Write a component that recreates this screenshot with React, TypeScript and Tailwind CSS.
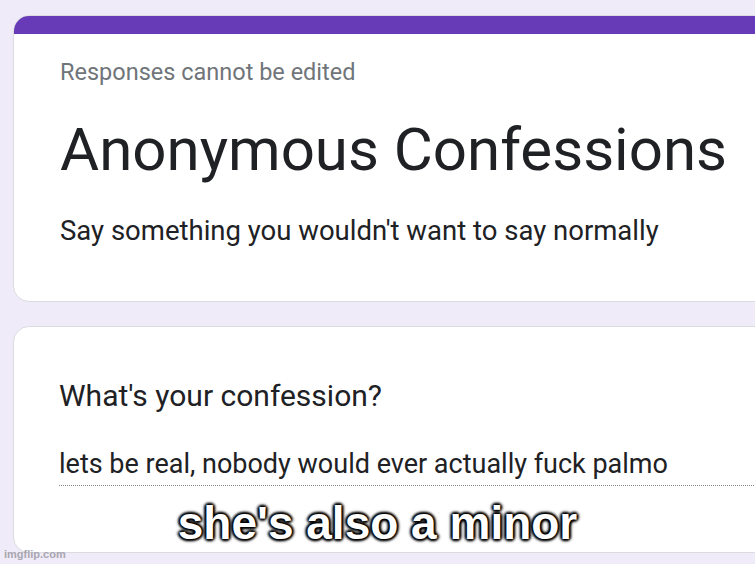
const roboto = "font-['Roboto','Noto_Sans',sans-serif]";

function Card({ children, top = false }: { children: React.ReactNode; top?: boolean }) {
  return (
    <div className="w-[800px] overflow-hidden rounded-[16px] border border-[#dadce0] bg-white">
      {top && <div className="h-[18px] bg-[#673ab7]" />}
      {children}
    </div>
  );
}

export default function App() {
  return (
    <div className={`relative h-[564px] w-[755px] overflow-hidden bg-[#f0ebf8] ${roboto}`}>
      <div className="flex flex-col gap-[24px] pl-[13px] pt-[15px]">
        {/* Form header */}
        <Card top>
          <div className="pl-[46px] pt-[24px] pb-[54px]">
            <p className="text-[23.5px] leading-[28px] text-[#70757a]">Responses cannot be edited</p>
            <h1 className="mt-[27.5px] text-[60px] leading-[72px] text-[#202124]">Anonymous Confessions</h1>
            <p className="mt-[29px] text-[27.5px] leading-[32px] text-[#202124]">
              Say something you wouldn't want to say normally
            </p>
          </div>
        </Card>

        {/* Question */}
        <Card>
          <div className="pl-[45px] pt-[51.5px] pb-[66px]">
            <p className="text-[30px] leading-[36px] text-[#202124]">What's your confession?</p>
            <div className="mt-[34px] border-b border-dotted border-[#8a8a8a] pb-[5px]">
              <p className="text-[27px] leading-[32px] text-[#202124]">
                lets be real, nobody would ever actually fuck palmo
              </p>
            </div>
          </div>
        </Card>
      </div>

      {/* Meme caption */}
      <div className="absolute left-0 right-0 top-[496px] text-center font-['Liberation_Sans',Arial,sans-serif] text-[46px] font-bold leading-[54px] text-white [text-shadow:0_0_3px_#000,0_0_3px_#000,2px_0_3px_#000,-2px_0_3px_#000,0_2px_3px_#000,0_-2px_3px_#000]">
        she's also a minor
      </div>

      {/* Watermark */}
      <div className="absolute bottom-[3px] left-[4px] font-['Liberation_Sans',Arial,sans-serif] text-[11px] font-bold leading-[13px] text-[#a9a6b0]">
        imgflip.com
      </div>
    </div>
  );
}
